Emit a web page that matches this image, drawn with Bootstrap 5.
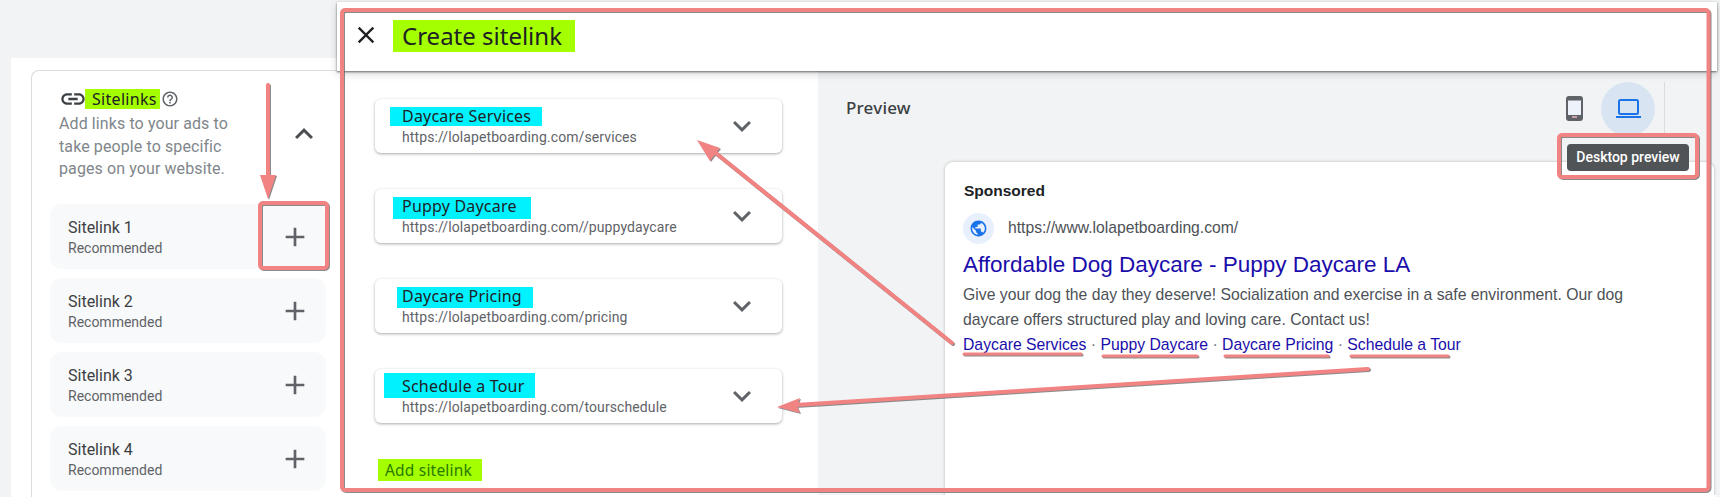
<!DOCTYPE html>
<html lang="en">

<head>
    <meta charset="UTF-8">
    <title>Create sitelink</title>
    <link href="https://cdn.jsdelivr.net/npm/bootstrap@5.3.3/dist/css/bootstrap.min.css" rel="stylesheet">
    <style>
        body { width: 1720px; height: 497px; overflow: hidden; background: #f1f3f4; font-family: Roboto, sans-serif; position: relative; }
        .side-wrap { width: 337px; padding: 58px 0 0 11px; flex: none; }
        .side-panel { background: #fff; height: 439px; padding: 12px 0 0 20px; }
        .side-box { border: 1px solid #dadce0; border-right: 0; border-bottom: 0; border-top-left-radius: 8px; height: 427px; padding: 14px 11px 0 18px; }
        .side-head { padding: 0 0 0 9px; height: 119px; }
        .side-title { font: 400 16px "Noto Sans", sans-serif; letter-spacing: .3px; color: #202124; line-height: 20px; background: #a4ff00; padding: 0 3px 0 7px; margin: -1px 1px 0 -2px; }
        .side-desc { font-size: 16px; letter-spacing: .1px; line-height: 22.5px; color: #80868b; width: 180px; }
        .side-chevron { margin: 0 4px 21px 0; }
        .link-row { background: #f8f9fa; border-radius: 12px; height: 65px; margin-bottom: 9px; padding: 0 15px 0 18px; }
        .link-text { padding-top: 2px; }
        .link-name { font-size: 16px; color: #3c4043; line-height: 21px; }
        .link-sub { font-size: 14px; color: #5f6368; line-height: 20px; }
        .modal-wrap { margin: 2px 3px 0 0; min-width: 0; background: #fff; padding-bottom: 2px; }
        .dlg-head { height: 69px; flex: none; background: #fff; box-shadow: 0 1px 2px rgba(60, 64, 67, .75), 0 3px 8px rgba(60, 64, 67, .2); position: relative; z-index: 1; }
        .dlg-close { margin: -3px 0 0 15px; }
        .dlg-title { font: 400 24px "Noto Sans", sans-serif; color: #202124; background: #a4ff00; margin: -1px 0 0 13px; padding: 0 13px 0 9px; line-height: 32px; }
        .dlg-body { min-height: 0; }
        .dlg-left { width: 481px; flex: none; padding: 28px 36px 0 38px; background: #fff; }
        .site-item { height: 54px; margin-bottom: 36px; border: 0; border-radius: 6px; box-shadow: 0 1px 3px rgba(60, 64, 67, .45); padding: 0 22px 0 27px; }
        .site-text { margin-top: 1px; }
        .site-name { font: 400 16px "Noto Sans", sans-serif; letter-spacing: .2px; color: #202124; line-height: 19px; background: #00f2ff; display: inline-block; vertical-align: top; }
        .hl-1 { margin-left: -12px; padding: 0 11px 0 12px; }
        .hl-2 { margin: 0 0 -3px -9px; padding: 0 14px 3px 9px; }
        .hl-3 { margin: 0 0 -2px -5px; padding: 0 11px 2px 5px; }
        .hl-4 { margin: -4px 0 -2px -18px; padding: 4px 10px 2px 18px; }
        .site-url { font-size: 14px; letter-spacing: .1px; color: #5f6368; line-height: 19px; margin-top: -3px; position: relative; }
        .add-link { font: 400 15.5px "Noto Sans", sans-serif; letter-spacing: .2px; color: #2a7a00; background: #a4ff00; line-height: 22px; padding: 0 10px 0 7px; margin: -3px 0 0 3px; }
        .dlg-right { background: #f1f3f4; min-width: 0; }
        .preview-bar { height: 91px; padding: 0 0 16px 28px; }
        .preview-label { font: 500 17px "Noto Sans", sans-serif; letter-spacing: .2px; color: #3c4043; margin-top: -2px; }
        .view-btn { width: 54px; height: 54px; border-radius: 50%; }
        .view-on { background: #d9e4f3; margin: 0 9px 0 18px; }
        .view-line { width: 1px; height: 54px; background: #dadce0; margin-right: 52px; }
        .ad-card { background: #fff; margin: 0 3px 0 127px; height: 400px; border-top-left-radius: 8px; border-top-right-radius: 8px; box-shadow: 0 0 3px rgba(60, 64, 67, .35); padding: 19px 19px 0 18px; font-family: "Liberation Sans", sans-serif; }
        .ad-tag { font-weight: 700; font-size: 15.5px; line-height: 20px; color: #202124; margin-left: 1px; }
        .ad-globe { width: 31px; height: 31px; border-radius: 50%; background: #e8f0fe; }
        .ad-url { font-size: 15.7px; color: #4d5156; margin: -2px 0 0 14px; }
        .ad-line { margin: 12px 0 0 0; }
        .ad-title { font-size: 22.5px; line-height: 28px; color: #1a0dab; margin: 7px 0 0 0; }
        .ad-text { font-size: 15.75px; line-height: 25px; color: #4d5156; width: 680px; margin-top: 3px; }
        .ad-links { font-size: 15.75px; line-height: 25px; color: #70757a; }
        .ad-links a { color: #1a0dab; text-decoration: none; }
        .hint-tip { position: absolute; left: 1567px; top: 144px; width: 122px; height: 27px; background: #515457; color: #fff; border-radius: 4px; font-size: 14px; font-weight: 500; line-height: 27px; text-align: center; z-index: 3; }
        .marks { position: absolute; left: 0; top: 0; z-index: 4; filter: drop-shadow(1px 1px 0 rgba(90, 90, 90, .7)); }
        .marks .ln { stroke: #f28383; fill: none; stroke-linecap: round; }
        .marks .head { fill: #f28383; }
    </style>
</head>

<body class="d-flex">

    <div class="side-wrap">
        <div class="side-panel">
            <div class="side-box">
                <div class="side-head d-flex justify-content-between align-items-center">
                    <div class="align-self-start">
                        <div class="d-flex align-items-center">
                            <svg width="28" height="28" viewBox="0 0 24 24" fill="#3c4043"><path d="M3.9 12c0-1.71 1.39-3.1 3.1-3.1h4V7H7c-2.76 0-5 2.24-5 5s2.24 5 5 5h4v-1.9H7c-1.71 0-3.1-1.39-3.1-3.1zM8 13h8v-2H8v2zm9-6h-4v1.9h4c1.71 0 3.1 1.39 3.1 3.1s-1.39 3.1-3.1 3.1h-4V17h4c2.76 0 5-2.24 5-5s-2.24-5-5-5z"/></svg>
                            <span class="side-title">Sitelinks</span>
                            <svg width="18" height="18" viewBox="0 0 24 24" fill="#5f6368"><path d="M11 18h2v-2h-2v2zm1-16C6.48 2 2 6.48 2 12s4.48 10 10 10 10-4.48 10-10S17.52 2 12 2zm0 18c-4.41 0-8-3.59-8-8s3.59-8 8-8 8 3.59 8 8-3.59 8-8 8zm0-14c-2.21 0-4 1.79-4 4h2c0-1.1.9-2 2-2s2 .9 2 2c0 2-3 1.75-3 5h2c0-2.25 3-2.5 3-5 0-2.21-1.79-4-4-4z"/></svg>
                        </div>
                        <div class="side-desc">Add links to your ads to take people to specific pages on your website.</div>
                    </div>
                    <svg class="side-chevron" width="36" height="36" viewBox="0 0 24 24" fill="#4a4d51"><path d="M12 8l-6 6 1.41 1.41L12 10.83l4.59 4.58L18 14z"/></svg>
                </div>
                <div id="rows"></div>
            </div>
        </div>
    </div>

    <div class="modal-wrap flex-grow-1 d-flex flex-column">
        <div class="dlg-head d-flex align-items-center">
            <svg class="dlg-close" width="28" height="28" viewBox="0 0 24 24" fill="#202124"><path d="M19 6.41L17.59 5 12 10.59 6.41 5 5 6.41 10.59 12 5 17.59 6.41 19 12 13.41 17.59 19 19 17.59 13.41 12z"/></svg>
            <span class="dlg-title">Create sitelink</span>
        </div>
        <div class="dlg-body d-flex flex-grow-1">
            <div class="dlg-left">
                <div id="items"></div>
                <span class="add-link d-inline-block">Add sitelink</span>
            </div>
            <div class="dlg-right flex-grow-1 overflow-hidden">
                <div class="preview-bar d-flex justify-content-between align-items-center">
                    <span class="preview-label">Preview</span>
                    <div class="d-flex align-items-center">
                        <svg width="17" height="25" viewBox="0 0 17 25"><rect x="1" y="1" width="15" height="23" rx="2" fill="#eef3fb" stroke="#5f6368" stroke-width="2"/><rect x="1" y="2" width="15" height="2.5" fill="#5f6368"/><rect x="1" y="19" width="15" height="4" fill="#5f6368"/><rect x="6" y="20" width="5" height="2" fill="#c9a0a8"/></svg>
                        <div class="view-btn view-on d-flex align-items-center justify-content-center">
                            <svg width="25" height="20" viewBox="0 0 25 20" fill="none"><rect x="3" y="1" width="19" height="14" rx="1.5" stroke="#1a73e8" stroke-width="2"/><rect x="0" y="17" width="25" height="2" fill="#1a73e8"/></svg>
                        </div>
                        <div class="view-line"></div>
                    </div>
                </div>
                <div class="ad-card">
                    <div class="ad-tag">Sponsored</div>
                    <div class="ad-line d-flex align-items-center">
                        <div class="ad-globe d-flex align-items-center justify-content-center">
                            <svg width="19" height="19" viewBox="0 0 24 24" fill="#1a73e8"><path d="M12 2C6.48 2 2 6.48 2 12s4.48 10 10 10 10-4.48 10-10S17.52 2 12 2zm-1 17.93c-3.95-.49-7-3.85-7-7.93 0-.62.08-1.21.21-1.79L9 15v1c0 1.1.9 2 2 2v1.93zm6.9-2.54c-.26-.81-1-1.39-1.9-1.39h-1v-3c0-.55-.45-1-1-1H8v-2h2c.55 0 1-.45 1-1V7h2c1.1 0 2-.9 2-2v-.41c2.93 1.19 5 4.06 5 7.41 0 2.08-.8 3.97-2.1 5.39z"/></svg>
                        </div>
                        <span class="ad-url">https://www.lolapetboarding.com/</span>
                    </div>
                    <div class="ad-title">Affordable Dog Daycare - Puppy Daycare LA</div>
                    <div class="ad-text">Give your dog the day they deserve! Socialization and exercise in a safe environment. Our dog daycare offers structured play and loving care. Contact us!</div>
                    <div class="ad-links"><a href="#">Daycare Services</a> · <a href="#">Puppy Daycare</a> · <a href="#">Daycare Pricing</a> · <a href="#">Schedule a Tour</a></div>
                </div>
            </div>
        </div>
    </div>

    <div class="hint-tip">Desktop preview</div>

    <svg class="marks" width="1720" height="497" viewBox="0 0 1720 497">
        <rect class="ln" x="342" y="10" width="1366.5" height="480" rx="3" stroke-width="4"/>
        <rect class="ln" x="260" y="203" width="67" height="65" rx="3" stroke-width="4"/>
        <rect class="ln" x="1559" y="135" width="138" height="42" rx="3" stroke-width="4"/>
        <path class="ln" stroke-width="4" d="M268 85V180"/>
        <path class="head" d="M260 175H276L268 199Z"/>
        <path class="ln" stroke-width="4" d="M952 343L712 150"/>
        <path class="head" d="M697 140L720 148L710 161Z"/>
        <path class="ln" stroke-width="4" d="M1368 369L795 405"/>
        <path class="head" d="M777 407L800 398L797 406L800 413Z"/>
        <path class="ln" stroke-width="3" d="M964 354H1081M1103 356H1197M1225 356H1328M1351 356H1448"/>
    </svg>

    <script src="https://cdn.jsdelivr.net/npm/bootstrap@5.3.3/dist/js/bootstrap.bundle.min.js"></script>
    <script>
        const plus = '<svg width="32" height="32" viewBox="0 0 24 24" fill="#5f6368"><path d="M19 13h-6v6h-2v-6H5v-2h6V5h2v6h6v2z"/></svg>';
        const chev = '<svg width="36" height="36" viewBox="0 0 24 24" fill="#5f6368"><path d="M16.59 8.59L12 13.17 7.41 8.59 6 10l6 6 6-6z"/></svg>';

        document.getElementById('rows').innerHTML = [1, 2, 3, 4].map(n => `
            <div class="link-row d-flex justify-content-between align-items-center">
                <div class="link-text">
                    <div class="link-name">Sitelink ${n}</div>
                    <div class="link-sub">Recommended</div>
                </div>
                ${plus}
            </div>`).join('');

        const items = [
            ['Daycare Services', 'https://lolapetboarding.com/services'],
            ['Puppy Daycare', 'https://lolapetboarding.com//puppydaycare'],
            ['Daycare Pricing', 'https://lolapetboarding.com/pricing'],
            ['Schedule a Tour', 'https://lolapetboarding.com/tourschedule']
        ];
        document.getElementById('items').innerHTML = items.map((val, i) => `
            <div class="card site-item d-flex flex-row justify-content-between align-items-center">
                <div class="site-text">
                    <div><span class="site-name hl-${i + 1}">${val[0]}</span></div>
                    <div class="site-url">${val[1]}</div>
                </div>
                ${chev}
            </div>`).join('');
    </script>

</body>

</html>
